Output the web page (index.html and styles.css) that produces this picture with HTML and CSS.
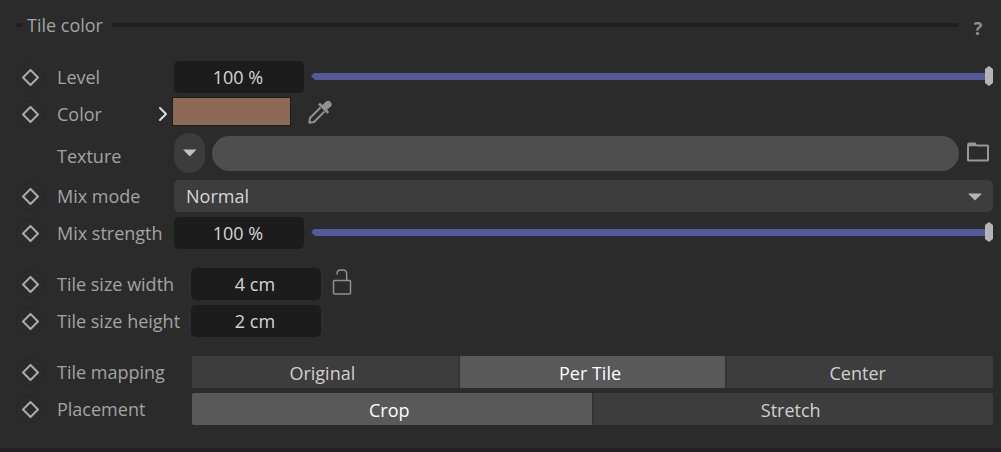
FILE: index.html
```html
<!DOCTYPE html>
<html lang="en">
<head>
  <meta charset="UTF-8" />
  <meta name="viewport" content="width=device-width, initial-scale=1" />
  <title>Tile color</title>
  <link rel="stylesheet" href="styles.css">
</head>
<body>
  <svg class="sprite" width="0" height="0" aria-hidden="true">
    <symbol id="key" viewBox="0 0 28 28">
      <circle cx="14" cy="14" r="13.5" fill="none" stroke="#272727" />
      <path d="M14.500 7 L22 14.500 L14.500 22 L7 14.500 Z" fill="none" stroke="#acacac" stroke-width="2" stroke-linejoin="round" />
    </symbol>
  </svg>

  <main class="panel">
    <header class="panel-head">
      <h2>Tile color</h2>
      <button type="button" class="help" aria-label="Help">?</button>
    </header>

    <form class="rows" autocomplete="off">
      <div class="row">
        <svg class="key"><use href="#key" /></svg>
        <label class="name" for="level">Level</label>
        <input class="number" type="text" id="level" value="100 %">
        <input class="slider" type="range" min="0" max="100" value="100" aria-label="Level slider">
      </div>

      <div class="row">
        <svg class="key"><use href="#key" /></svg>
        <label class="name name-short" for="color">Color</label>
        <button type="button" class="icon-button expand" aria-label="Expand color">
          <svg width="10" height="16" viewBox="0 0 10 16"><path d="M2 2 L8 8 L2 14" fill="none" stroke="#dedede" stroke-width="2" stroke-linecap="round" stroke-linejoin="round" /></svg>
        </button>
        <input class="swatch" type="color" id="color" value="#8d6a56">
        <button type="button" class="icon-button picker" aria-label="Pick color">
          <svg width="24" height="24" viewBox="0 0 24 24">
            <path d="M12.500 7.500 L2 18 L1.300 22.700 L6 22 L16.500 11.500" fill="none" stroke="#919191" stroke-width="2" stroke-linejoin="round" />
            <path d="M10 4.500 L12 2.800 L14.500 5 L18 1.500 A3.600 3.600 0 0 1 23 6.500 L19 9.800 L21.200 12 L19.400 13.800 Z" fill="#919191" />
          </svg>
        </button>
      </div>

      <div class="row row-texture">
        <label class="name name-plain" for="texture">Texture</label>
        <button type="button" class="pill" aria-label="Texture menu">
          <svg width="14" height="8" viewBox="0 0 14 8"><path d="M0 0.500 H13.500 L6.800 7.500 Z" fill="#c0c0c0" /></svg>
        </button>
        <input class="path" type="text" id="texture">
        <button type="button" class="icon-button folder" aria-label="Browse">
          <svg width="24" height="20" viewBox="0 0 24 20">
            <path d="M2 4 V18 Q2 18.500 2.500 18.500 H21.500 Q22 18.500 22 18 V4 Q22 3.500 21.500 3.500 H11" fill="none" stroke="#979797" stroke-width="2" />
            <path d="M1.200 4.800 V2.500 Q1.200 0.500 3 0.500 H8.500 Q9.500 0.500 10.200 1.500 L11.800 4.300 H3 Z" fill="#979797" />
          </svg>
        </button>
      </div>

      <div class="row">
        <svg class="key"><use href="#key" /></svg>
        <label class="name" for="mixMode">Mix mode</label>
        <div class="select">
          <select id="mixMode">
            <option>Normal</option>
          </select>
          <svg width="14" height="8" viewBox="0 0 14 8"><path d="M0 0.500 H14 L7 7.500 Z" fill="#b4b4b4" /></svg>
        </div>
      </div>

      <div class="row">
        <svg class="key"><use href="#key" /></svg>
        <label class="name" for="mixStrength">Mix strength</label>
        <input class="number" type="text" id="mixStrength" value="100 %">
        <input class="slider" type="range" min="0" max="100" value="100" aria-label="Mix strength slider">
      </div>

      <div class="row row-group">
        <svg class="key"><use href="#key" /></svg>
        <label class="name name-wide" for="tileWidth">Tile size width</label>
        <input class="number" type="text" id="tileWidth" value="4 cm">
        <button type="button" class="icon-button lock" aria-label="Lock ratio">
          <svg width="20" height="26" viewBox="0 0 20 26">
            <rect x="1.500" y="11.500" width="17" height="13.500" rx="1" fill="none" stroke="#919191" stroke-width="1.500" />
            <path d="M5 5.500 V5 Q5 1 8.500 1 H11 Q14.700 1 14.700 5 V11" fill="none" stroke="#919191" stroke-width="1.500" />
          </svg>
        </button>
      </div>

      <div class="row">
        <svg class="key"><use href="#key" /></svg>
        <label class="name name-wide" for="tileHeight">Tile size height</label>
        <input class="number" type="text" id="tileHeight" value="2 cm">
      </div>

      <div class="row row-group" role="radiogroup" aria-labelledby="mappingName">
        <svg class="key"><use href="#key" /></svg>
        <span class="name name-wide" id="mappingName">Tile mapping</span>
        <div class="segments">
          <label><input type="radio" name="mapping"><span>Original</span></label>
          <label><input type="radio" name="mapping" checked><span>Per Tile</span></label>
          <label><input type="radio" name="mapping"><span>Center</span></label>
        </div>
      </div>

      <div class="row" role="radiogroup" aria-labelledby="placementName">
        <svg class="key"><use href="#key" /></svg>
        <span class="name name-wide" id="placementName">Placement</span>
        <div class="segments">
          <label><input type="radio" name="placement" checked><span>Crop</span></label>
          <label><input type="radio" name="placement"><span>Stretch</span></label>
        </div>
      </div>
    </form>
  </main>
</body>
</html>
```
FILE: styles.css
```css
* {
  box-sizing: border-box;
}
body {
  margin: 0;
  background: #232123;
  color: #a3a3a3;
  font-family: 'Segoe UI', 'Open Sans', sans-serif;
  font-size: 18px;
  line-height: 24px;
}
input, select, button {
  font: inherit;
  color: #d6d6d6;
  margin: 0;
  padding: 0;
  border: none;
}
.sprite {
  position: absolute;
}
.panel {
  padding: 12px 8px 23px 16px;
  background: #2b2b2b;
}

/* title with the rule running through it */
.panel-head {
  display: flex;
  align-items: center;
  height: 26px;
  margin-bottom: 23px;
}
.panel-head h2 {
  flex: 1;
  display: flex;
  align-items: center;
  margin: 0;
  font-size: 18px;
  font-weight: normal;
}
.panel-head h2::before,
.panel-head h2::after {
  content: "";
  height: 4px;
  background: #202020;
}
.panel-head h2::before {
  width: 7px;
  margin-right: 4px;
}
.panel-head h2::after {
  flex: 1;
  margin-left: 9px;
}
.help {
  width: 34px;
  padding: 6px 0 0 4px;
  background: none;
  color: #8e8e8e;
  font-weight: bold;
}

.rows {
  display: flex;
  flex-direction: column;
  gap: 5px;
}
.row {
  display: flex;
  align-items: center;
  height: 32px;
}
.row-group {
  margin-top: 14px;
}
.row-texture {
  height: 40px;
  margin: -2px 0 2px;
}
.key {
  flex: none;
  width: 28px;
  height: 28px;
  margin-right: 13px;
}
.name {
  flex: none;
  width: 117px;
  white-space: nowrap;
}
.name-short {
  width: 101px;
}
.name-wide {
  width: 134px;
}
.name-plain {
  margin-left: 41px;
  padding-top: 5px;
}

.number {
  flex: none;
  width: 130px;
  height: 32px;
  padding-right: 2px;
  border-radius: 5px;
  background: #1c1c1c;
  text-align: center;
}
.icon-button {
  flex: none;
  display: flex;
  background: none;
}
.expand {
  width: 14px;
}
.swatch {
  appearance: none;
  width: 119px;
  height: 29px;
  margin-bottom: 5px;
  border: 1px solid #1c1c1c;
  background: none;
}
.swatch::-webkit-color-swatch-wrapper {
  padding: 0;
}
.swatch::-webkit-color-swatch {
  border: none;
}
.picker {
  margin: 0 0 4px 17px;
}
.pill {
  flex: none;
  display: flex;
  align-items: center;
  justify-content: center;
  width: 31px;
  height: 40px;
  margin-right: 7px;
  border-radius: 16px;
  background: #3c3c3c;
}
.path {
  flex: 1;
  min-width: 0;
  height: 35px;
  padding: 0 16px;
  border-radius: 18px;
  background: #4e4e4e;
}
.folder {
  margin: 0 3px 2px 7px;
}
.lock {
  margin: 0 0 5px 11px;
}

.slider {
  appearance: none;
  flex: 1;
  min-width: 0;
  height: 20px;
  margin: 0 0 2px 7px;
  background: none;
}
.slider::-webkit-slider-runnable-track {
  height: 20px;
  background: linear-gradient(#55589a, #55589a) center / 100% 7px no-repeat;
  clip-path: polygon(0 50%, 4px 30%, 4px 0, 100% 0, 100% 100%, 4px 100%, 4px 70%);
}
.slider::-webkit-slider-thumb {
  appearance: none;
  width: 8px;
  height: 20px;
  background: #b4b4b4;
  clip-path: polygon(50% 0, 100% 15%, 100% 85%, 50% 100%, 0 85%, 0 15%);
}

.select {
  flex: 1;
  display: grid;
  align-items: center;
}
.select select,
.select svg {
  grid-area: 1 / 1;
}
.select select {
  appearance: none;
  width: 100%;
  height: 32px;
  padding-left: 12px;
  border-radius: 5px;
  background: #3d3d3d;
}
.select svg {
  justify-self: end;
  margin: 2px 11px 0 0;
  pointer-events: none;
}

.segments {
  flex: 1;
  display: flex;
  gap: 2px;
  margin-left: 1px;
  border-radius: 2px;
  background: #333;
  overflow: hidden;
}
.segments label {
  flex: 1 1 0;
  display: grid;
}
.segments input,
.segments span {
  grid-area: 1 / 1;
}
.segments input {
  appearance: none;
  height: 32px;
  background: #3d3d3d;
}
.segments input:checked {
  background: #595959;
}
.segments span {
  align-self: center;
  padding: 2px 5px 0 0;
  text-align: center;
  color: #d0d0d0;
}
.segments input:checked + span {
  color: #fff;
}
```
